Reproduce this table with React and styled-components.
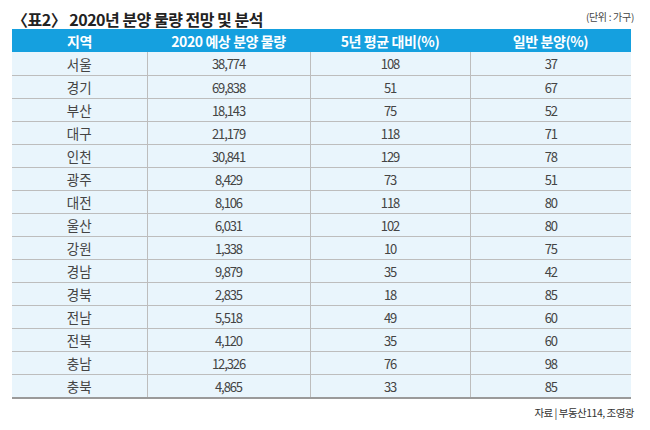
import styled, { createGlobalStyle } from "styled-components"

const GlobalStyle = createGlobalStyle`
  html, body {
    margin: 0;
    padding: 0;
    background: #fff;
  }
  body {
    font-family: "Noto Sans CJK KR", "Noto Sans", sans-serif;
    color: #333;
  }
`

const rows = [
  ["서울", "38,774", "108", "37"],
  ["경기", "69,838", "51", "67"],
  ["부산", "18,143", "75", "52"],
  ["대구", "21,179", "118", "71"],
  ["인천", "30,841", "129", "78"],
  ["광주", "8,429", "73", "51"],
  ["대전", "8,106", "118", "80"],
  ["울산", "6,031", "102", "80"],
  ["강원", "1,338", "10", "75"],
  ["경남", "9,879", "35", "42"],
  ["경북", "2,835", "18", "85"],
  ["전남", "5,518", "49", "60"],
  ["전북", "4,120", "35", "60"],
  ["충남", "12,326", "76", "98"],
  ["충북", "4,865", "33", "85"],
]

const Page = styled.div`
  width: 650px;
  height: 430px;
  padding: 6px 16px 0 12px;
  box-sizing: border-box;
`

const TitleBar = styled.div`
  display: flex;
  justify-content: space-between;
  align-items: flex-end;
  width: 622px;
  height: 23px;
`

const Title = styled.h1`
  margin: 0;
  font-size: 16px;
  font-weight: 700;
  letter-spacing: -0.5px;
  color: #222;
  line-height: 20px;
`

const Unit = styled.span`
  font-size: 10px;
  color: #444;
  letter-spacing: -0.3px;
  line-height: 14px;
  margin-bottom: 5px;
`

const Table = styled.table`
  width: 619px;
  border-collapse: collapse;
  table-layout: fixed;
  border-bottom: 2px solid #9a9a9a;
`

const HeadCell = styled.th`
  height: 23px;
  padding: 0;
  background: #15a0df;
  color: #fff;
  font-size: 14px;
  font-weight: 700;
  letter-spacing: -0.4px;
  text-align: center;
`

const Cell = styled.td`
  height: 22px;
  padding: 0;
  background: #e9f5fc;
  border-top: 1px solid #bdbdbd;
  border-left: ${(p) => (p.$first ? "none" : "1px solid #bdbdbd")};
  font-size: ${(p) => (p.$first ? "13.5px" : "13px")};
  letter-spacing: ${(p) => (p.$first ? "0" : "-1.1px")};
  color: #444;
  text-align: center;
`

const FirstRowCell = styled(Cell)`
  border-top: none;
  height: 23px;
`

const Source = styled.p`
  margin: 6px 0 0;
  width: 622px;
  text-align: right;
  font-size: 10.5px;
  letter-spacing: -0.5px;
  color: #333;
`

const widths = [135, 163, 160, 161]
const headers = ["지역", "2020 예상 분양 물량", "5년 평균 대비(%)", "일반 분양(%)"]

export default function App() {
  return (
    <Page>
      <GlobalStyle />
      <TitleBar>
        <Title>〈표2〉 2020년 분양 물량 전망 및 분석</Title>
        <Unit>(단위 : 가구)</Unit>
      </TitleBar>
      <Table>
        <colgroup>
          {widths.map((w, i) => (
            <col key={i} style={{ width: w }} />
          ))}
        </colgroup>
        <thead>
          <tr>
            {headers.map((h) => (
              <HeadCell key={h}>{h}</HeadCell>
            ))}
          </tr>
        </thead>
        <tbody>
          {rows.map((r, ri) => (
            <tr key={r[0]}>
              {r.map((v, ci) => {
                const C = ri === 0 ? FirstRowCell : Cell
                return (
                  <C key={ci} $first={ci === 0}>
                    {v}
                  </C>
                )
              })}
            </tr>
          ))}
        </tbody>
      </Table>
      <Source>자료 | 부동산114, 조영광</Source>
    </Page>
  )
}
